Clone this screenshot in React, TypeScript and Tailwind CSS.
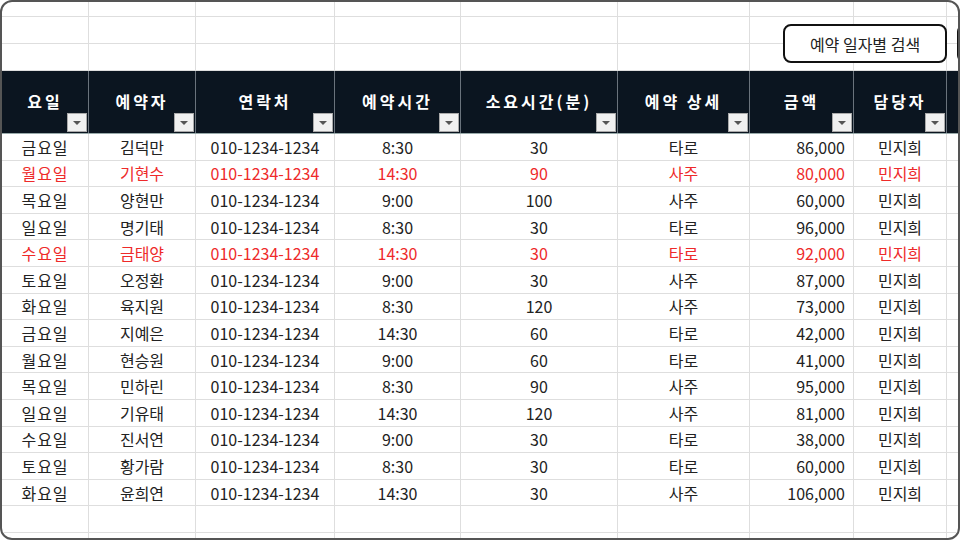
import React from "react";

const cols = [87, 107, 139, 126, 157, 132, 104, 93, 60];
const headers = ["요일", "예약자", "연락처", "예약시간", "소요시간(분)", "예약 상세", "금액", "담당자"];
const data: [string, string, string, string, string, string, string, boolean][] = [
  ["금요일", "김덕만", "8:30", "30", "타로", "86,000", "민지희", false],
  ["월요일", "기현수", "14:30", "90", "사주", "80,000", "민지희", true],
  ["목요일", "양현만", "9:00", "100", "사주", "60,000", "민지희", false],
  ["일요일", "명기태", "8:30", "30", "타로", "96,000", "민지희", false],
  ["수요일", "금태양", "14:30", "30", "타로", "92,000", "민지희", true],
  ["토요일", "오정환", "9:00", "30", "사주", "87,000", "민지희", false],
  ["화요일", "육지원", "8:30", "120", "사주", "73,000", "민지희", false],
  ["금요일", "지예은", "14:30", "60", "타로", "42,000", "민지희", false],
  ["월요일", "현승원", "9:00", "60", "타로", "41,000", "민지희", false],
  ["목요일", "민하린", "8:30", "90", "사주", "95,000", "민지희", false],
  ["일요일", "기유태", "14:30", "120", "사주", "81,000", "민지희", false],
  ["수요일", "진서연", "9:00", "30", "타로", "38,000", "민지희", false],
  ["토요일", "황가람", "8:30", "30", "타로", "60,000", "민지희", false],
  ["화요일", "윤희연", "14:30", "30", "사주", "106,000", "민지희", false],
].map((r) => [r[0], r[1], "010-1234-1234", r[2], r[3], r[4], r[5], r[6], r[7]] as any);

const font = { fontFamily: '"Noto Sans CJK KR", "Noto Sans", sans-serif' };

function EmptyRow({ h }: { h: number }) {
  return (
    <div className="flex border-b border-[#dedede]" style={{ height: h }}>
      {cols.map((w, i) => (
        <div key={i} className="shrink-0 border-r border-[#dedede]" style={{ width: w }} />
      ))}
    </div>
  );
}

export default function App() {
  return (
    <div className="w-[960px] h-[540px] bg-white overflow-hidden" style={font}>
      <div className="w-[960px] h-[540px] rounded-[12px] border-2 border-[#555] overflow-hidden relative bg-white">
        <EmptyRow h={15} />
        <EmptyRow h={27} />
        <EmptyRow h={27} />
        <div className="flex h-[63px] bg-[#0b1520] border-b border-[#9aa]">
          {cols.map((w, i) => (
            <div key={i} className="shrink-0 relative border-r border-[#6a737c] flex items-start justify-center pt-[18px] text-white font-bold text-[16px] tracking-[3px]" style={{ width: w }}>
              {headers[i] ?? ""}
              {headers[i] && (
                <div className="absolute right-[1px] bottom-[1px] w-[20px] h-[19px] bg-[#f0f0f0] border border-[#aaa] flex items-center justify-center">
                  <div className="w-0 h-0 border-l-[4px] border-r-[4px] border-t-[4px] border-l-transparent border-r-transparent border-t-[#555]" />
                </div>
              )}
            </div>
          ))}
        </div>
        {data.map((r: any, ri: number) => (
          <div key={ri} className={`flex h-[26.6px] border-b border-[#dedede] text-[16px] ${r[8] ? "text-[#ee2a2a]" : "text-[#222]"}`}>
            {cols.map((w, i) => (
              <div key={i} className={`shrink-0 border-r border-[#dedede] flex items-center ${i === 6 ? "justify-end pr-[8px]" : "justify-center"} ${i === 0 ? "tracking-[1px]" : ""}`} style={{ width: w }}>
                {i < 8 ? r[i] : ""}
              </div>
            ))}
          </div>
        ))}
        <EmptyRow h={27} />
        <EmptyRow h={27} />
        <div className="absolute left-[781px] top-[22px] w-[164px] h-[39px] rounded-[8px] border-2 border-[#111] bg-white flex items-center justify-center text-[16px] text-[#222]">
          예약 일자별 검색
        </div>
        <div className="absolute left-[955px] top-[22px] w-[60px] h-[39px] rounded-[8px] border-2 border-[#111] bg-white" />
      </div>
    </div>
  );
}
